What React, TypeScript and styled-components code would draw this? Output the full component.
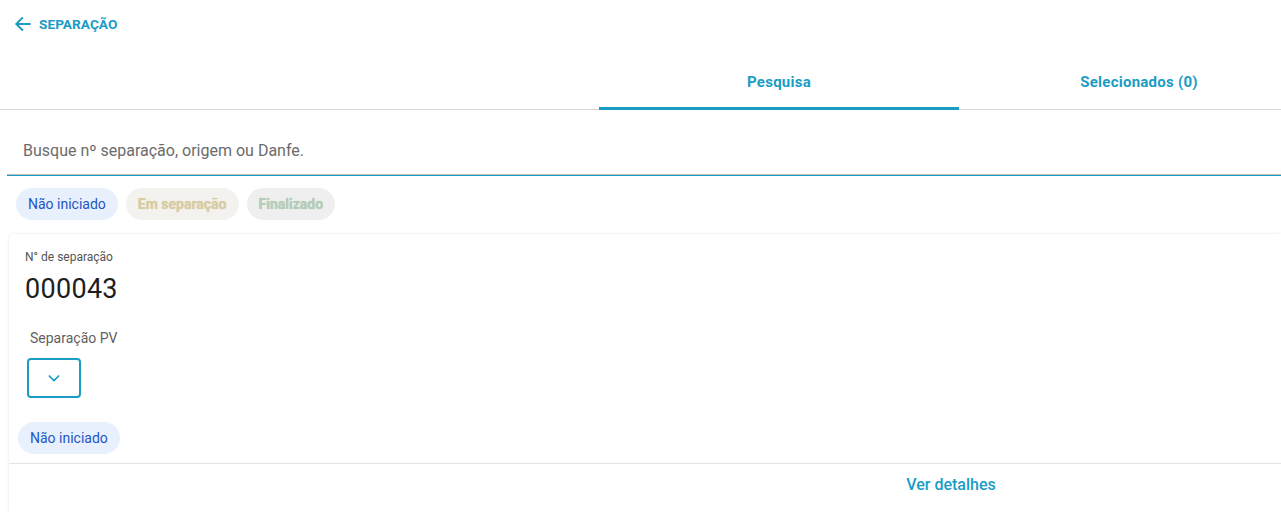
import React from "react"
import styled, { createGlobalStyle } from "styled-components"

const teal = "#1a9cc4"

const GlobalStyle = createGlobalStyle`
    html, body {
        margin: 0;
        padding: 0;
        background: #fff;
        font-family: Roboto, "Liberation Sans", Arial, sans-serif;
        overflow: hidden;
    }
`

const Page = styled.div`
    width: 1281px;
    height: 512px;
    overflow: hidden;
    display: flex;
    flex-direction: column;
`

const Header = styled.div`
    height: 48px;
    display: flex;
    align-items: center;
    gap: 6px;
    padding-left: 13px;
    color: ${teal};
    font-size: 13.7px;
    font-weight: 700;
`

const TabBar = styled.div`
    display: flex;
    padding-left: 599px;
    height: 61px;
    border-bottom: 1px solid #d6d6d6;
`

const Tab = styled.div<{ $active?: boolean }>`
    flex: 0 0 360px;
    display: flex;
    align-items: center;
    justify-content: center;
    padding-top: 8px;
    color: ${teal};
    font-size: 15px;
    font-weight: 700;
    letter-spacing: 0.25px;
    box-sizing: border-box;
    border-bottom: 3px solid ${p => (p.$active ? teal : "transparent")};
    margin-bottom: -1px;
    height: 62px;
`

const SearchField = styled.div`
    margin: 0 0 0 7px;
    height: 66px;
    display: flex;
    align-items: flex-end;
    padding: 0 0 15px 16px;
    box-sizing: border-box;
    border-bottom: 1px solid ${teal};
    box-shadow: inset 0 -1px 0 #bdbdbd;
    color: #6b6b6b;
    font-size: 16px;
`

const ChipRow = styled.div`
    display: flex;
    gap: 8px;
    padding: 12px 0 0 16px;
`

const Chip = styled.span<{ $bg: string; $fg: string; $blur?: boolean }>`
    display: inline-flex;
    align-items: center;
    height: 32px;
    padding: 0 12px;
    border-radius: 16px;
    background: ${p => p.$bg};
    color: ${p => p.$fg};
    font-size: 14px;
    font-weight: ${p => (p.$blur ? 700 : 400)};
    ${p => (p.$blur ? "text-shadow: 0 0 1px " + p.$fg + ";" : "")}
`

const Card = styled.div`
    margin: 14px 0 0 9px;
    flex: 1;
    background: #fff;
    border-radius: 4px 0 0 0;
    box-shadow: 0 0 3px rgba(0, 0, 0, 0.1);
    display: flex;
    flex-direction: column;
`

const CardBody = styled.div`
    padding: 16px 0 9px 9px;
    display: flex;
    flex-direction: column;
`

const Label = styled.div`
    padding-left: 7px;
    font-size: 12px;
    color: #555;
`

const Number = styled.div`
    padding-left: 7px;
    margin-top: 9px;
    font-size: 27px;
    color: #1e1e1e;
    letter-spacing: 0.3px;
`

const SubTitle = styled.div`
    padding-left: 12px;
    margin-top: 25px;
    font-size: 14px;
    color: #5f5f5f;
`

const ExpandButton = styled.button`
    margin: 12px 0 0 9px;
    width: 54px;
    height: 40px;
    border: 2px solid ${teal};
    border-radius: 4px;
    background: #fff;
    display: flex;
    align-items: center;
    justify-content: center;
    padding: 0;
`

const StatusRow = styled.div`
    margin-top: 24px;
`

const Footer = styled.div`
    border-top: 1px solid #e4e4e4;
    height: 40px;
    display: flex;
    align-items: center;
`

const FooterLink = styled.div`
    margin-left: 852px;
    width: 180px;
    text-align: center;
    color: ${teal};
    font-size: 16px;
    font-weight: 500;
`

const App = () => (
    <Page>
        <GlobalStyle />
        <Header>
            <svg width="20" height="20" viewBox="0 0 24 24" fill="none" stroke={teal} strokeWidth="2.4" strokeLinecap="square">
                <path d="M20 12H5" />
                <path d="M11 5l-7 7 7 7" />
            </svg>
            SEPARAÇÃO
        </Header>
        <TabBar>
            <Tab $active>Pesquisa</Tab>
            <Tab>Selecionados (0)</Tab>
        </TabBar>
        <SearchField>Busque nº separação, origem ou Danfe.</SearchField>
        <ChipRow>
            <Chip $bg="#e8f0fe" $fg="#1d55c4">Não iniciado</Chip>
            <Chip $bg="#f3f2ee" $fg="#d8cca6" $blur>Em separação</Chip>
            <Chip $bg="#eeefee" $fg="#b4ccb9" $blur>Finalizado</Chip>
        </ChipRow>
        <Card>
            <CardBody>
                <Label>N° de separação</Label>
                <Number>000043</Number>
                <SubTitle>Separação PV</SubTitle>
                <ExpandButton>
                    <svg width="16" height="16" viewBox="0 0 24 24" fill="none" stroke={teal} strokeWidth="2.6" strokeLinecap="round" strokeLinejoin="round">
                        <path d="M5 9l7 7 7-7" />
                    </svg>
                </ExpandButton>
                <StatusRow>
                    <Chip $bg="#e8f0fe" $fg="#1d55c4">Não iniciado</Chip>
                </StatusRow>
            </CardBody>
            <Footer>
                <FooterLink>Ver detalhes</FooterLink>
            </Footer>
        </Card>
    </Page>
)

export default App
